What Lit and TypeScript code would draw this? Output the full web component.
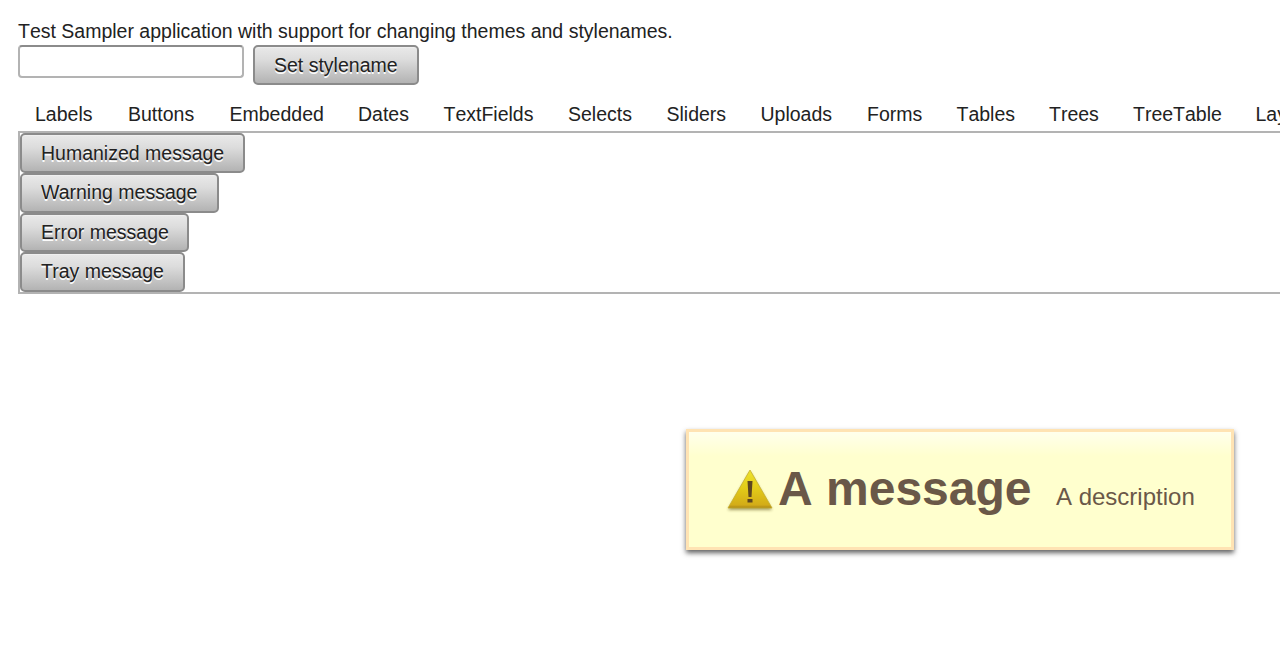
import { LitElement, html, css } from "lit";
import { customElement, property } from "lit/decorators.js";

@customElement("sampler-button")
class SamplerButton extends LitElement {
  @property() caption = "";
  @property({ type: Number }) span = 100;
  @property({ type: Number }) tall = 40;
  @property({ type: Number }) line = 35;

  static styles = css`
    :host { display: block; flex: none; }
    .button {
      display: block;
      box-sizing: border-box;
      margin: 0;
      padding: 0 0 1px 19px;
      border: 2px solid #8b8b8b;
      border-radius: 5px;
      background: linear-gradient(#e9e9e9, #dcdcdc 35%, #b3b3b3);
      box-shadow: inset 0 1px 0 #efefef;
      color: #222;
      font: inherit;
      text-align: left;
      text-shadow: 0 1.5px 0 rgba(255, 255, 255, 0.95);
      white-space: nowrap;
    }
    .label { display: block; }
  `;

  render() {
    return html`<button class="button" style="width:${this.span}px;height:${this.tall}px;line-height:${this.line}px"><span class="label">${this.caption}</span></button>`;
  }
}

@customElement("app-root")
class AppRoot extends LitElement {
  private tabs = [
    { caption: "Labels", pitch: 93 },
    { caption: "Buttons", pitch: 101.5 },
    { caption: "Embedded", pitch: 128.5 },
    { caption: "Dates", pitch: 85.5 },
    { caption: "TextFields", pitch: 124.5 },
    { caption: "Selects", pitch: 98.5 },
    { caption: "Sliders", pitch: 94 },
    { caption: "Uploads", pitch: 106.5 },
    { caption: "Forms", pitch: 89.5 },
    { caption: "Tables", pitch: 92.5 },
    { caption: "Trees", pitch: 84 },
    { caption: "TreeTable", pitch: 122.5 },
    { caption: "Layouts", pitch: 100 },
  ];

  private messages = [
    { caption: "Humanized message", width: 225, height: 40, line: 37 },
    { caption: "Warning message", width: 199, height: 40, line: 35 },
    { caption: "Error message", width: 169, height: 39, line: 35 },
    { caption: "Tray message", width: 165, height: 40, line: 35 },
  ];

  static styles = css`
    :host {
      display: block;
      position: relative;
      box-sizing: border-box;
      height: 654px;
      padding: 18px 0 0 18px;
      overflow: hidden;
      background: #fff;
      color: #222;
      font-family: "Liberation Sans", Arial, sans-serif;
      font-size: 19.5px;
    }
    .intro { height: 27px; line-height: 27px; white-space: nowrap; font-kerning: none; }
    .controls { display: flex; align-items: flex-start; gap: 9px; height: 56px; }
    .field {
      box-sizing: border-box;
      width: 226px;
      height: 33px;
      margin: 0;
      border: 2px solid #b3b3b3;
      border-top-color: #8b8b8b;
      border-radius: 4px;
      background: #fff;
      font: inherit;
    }
    .tabs {
      display: flex;
      height: 30px;
      padding-left: 17px;
      line-height: 27px;
      white-space: nowrap;
      font-kerning: none;
    }
    .tab { flex: none; }
    .panel {
      border: 2px solid #b3b3b3;
      border-right: 0;
      height: 159px;
    }
    .notice {
      position: absolute;
      left: 686px;
      top: 429px;
      box-sizing: border-box;
      width: 548px;
      height: 121px;
      display: flex;
      align-items: baseline;
      padding: 27px 0 0 38px;
      border: 3px solid #ffe3b3;
      background: linear-gradient(#ffffec, #ffffce 24px);
      box-shadow: 0 3px 5px rgba(0, 0, 0, 0.62);
      color: #6a5848;
      white-space: nowrap;
      font-kerning: none;
    }
    .icon { align-self: flex-start; flex: none; width: 48px; height: 48px; margin: 8px 4px 0 -1px; }
    .title { margin: 0; font-size: 48px; line-height: 60px; font-weight: bold; }
    .description { margin-left: 24.5px; font-size: 24px; }
  `;

  render() {
    return html`
      <div class="intro">Test Sampler application with support for changing themes and stylenames.</div>
      <div class="controls">
        <input class="field" type="text" aria-label="Stylename" />
        <sampler-button caption="Set stylename" .span=${166} .line=${37}></sampler-button>
      </div>
      <nav class="tabs">${this.tabs.map((t) => html`<span class="tab" style="width:${t.pitch}px">${t.caption}</span>`)}</nav>
      <section class="panel">
        ${this.messages.map((m) => html`<sampler-button .caption=${m.caption} .span=${m.width} .tall=${m.height} .line=${m.line}></sampler-button>`)}
      </section>
      <div class="notice" role="alert">
        <svg class="icon" viewBox="0 0 48 48" aria-hidden="true">
          <defs>
            <linearGradient id="gold" x1="0" y1="0" x2="0" y2="1">
              <stop offset="0" stop-color="#eee32b" />
              <stop offset="0.5" stop-color="#e2ca18" />
              <stop offset="0.92" stop-color="#d3ac18" />
              <stop offset="1" stop-color="#a98516" />
            </linearGradient>
            <filter id="soft" x="-20%" y="-20%" width="140%" height="140%">
              <feGaussianBlur stdDeviation="1.4" />
            </filter>
          </defs>
          <path d="M24 4 46 42H2Z" transform="translate(0 1)" fill="#675c1c" opacity="0.6" filter="url(#soft)" />
          <path d="M24 3 46 41H2Z" fill="url(#gold)" stroke="#c7ae2d" stroke-width="0.8" stroke-linejoin="round" />
          <path d="M21.500 14h5l-1 16h-3Z" fill="#5c4520" />
          <rect x="21.500" y="32" width="5" height="3.500" fill="#5c4520" />
        </svg>
        <h1 class="title">A message</h1>
        <span class="description">A description</span>
      </div>
    `;
  }
}
